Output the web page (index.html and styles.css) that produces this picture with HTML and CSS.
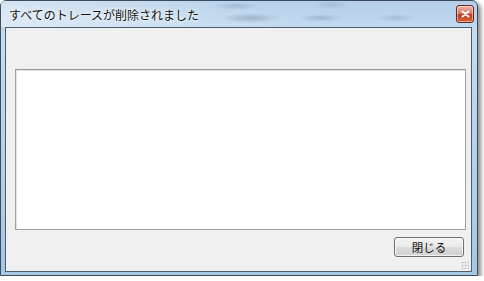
FILE: index.html
```html
<!DOCTYPE html>
<html lang="ja">
<head>
  <meta charset="UTF-8" />
  <title>すべてのトレースが削除されました</title>
  <link rel="stylesheet" href="styles.css">
</head>
<body>
  <div class="window">
    <div class="titlebar">
      <span class="title">すべてのトレースが削除されました</span>
      <button class="close" title="閉じる">
        <svg width="9" height="8" viewBox="0 0 9 8">
          <path d="M1.5 1.5 L7.5 6.5 M7.5 1.5 L1.5 6.5" stroke="#fff" stroke-width="2" stroke-linecap="round" />
        </svg>
      </button>
    </div>
    <div class="client">
      <div class="list"></div>
      <div class="footer">
        <button class="btn">閉じる</button>
      </div>
      <div class="grip"></div>
    </div>
  </div>
</body>
</html>
```

FILE: styles.css
```css
body {
  margin: 0;
  background: #fff;
  font-family: "Noto Sans CJK JP", "Noto Sans", sans-serif;
}
.window {
  width: 476px;
  height: 274px;
  border: 1px solid #3c4c5c;
  border-radius: 6px 6px 0 0;
  background: linear-gradient(to bottom, #b4cfe9 0%, #c6dcf0 12%, #a4c7e3 100%);
  box-shadow: 3px 3px 4px rgba(0,0,0,0.45);
  display: flex;
  flex-direction: column;
}
.titlebar {
  height: 26px;
  display: flex;
  align-items: flex-start;
  justify-content: space-between;
  padding: 0 3px 0 8px;
  background:
    radial-gradient(ellipse 30px 5px at 250px 17px, rgba(90,110,135,0.35), transparent),
    radial-gradient(ellipse 22px 4px at 320px 17px, rgba(90,110,135,0.3), transparent),
    radial-gradient(ellipse 20px 4px at 395px 17px, rgba(90,110,135,0.25), transparent),
    radial-gradient(ellipse 24px 4px at 235px 5px, rgba(90,110,135,0.25), transparent),
    radial-gradient(ellipse 18px 4px at 330px 4px, rgba(90,110,135,0.2), transparent),
    linear-gradient(to right, rgba(255,255,255,0.45), rgba(255,255,255,0.1) 45%, rgba(255,255,255,0) 70%);
}
.title {
  font-size: 12px;
  color: #111;
  margin-top: 5px;
  text-shadow: 0 0 6px #fff, 0 0 3px #fff;
}
.close {
  width: 18px;
  height: 18px;
  margin-top: 4px;
  padding: 0;
  border: 1px solid #6b2a1e;
  border-radius: 3px;
  background: linear-gradient(to bottom, #eab3a5 0%, #d97c66 45%, #c4391f 55%, #d9643f 100%);
  box-shadow: inset 0 0 0 1px rgba(255,255,255,0.45);
  display: flex;
  align-items: center;
  justify-content: center;
}
.client {
  flex: 1;
  margin: 0 5px 3px 4px;
  border: 1px solid #4d5d6d;
  background: #f0f0f0;
  display: flex;
  flex-direction: column;
  padding: 41px 5px 0 9px;
  position: relative;
}
.list {
  height: 159px;
  background: #fff;
  border: 1px solid #a0a0a0;
  border-top-color: #9a9a9a;
  box-shadow: inset 1px 1px 0 #e3e3e3;
}
.footer {
  display: flex;
  justify-content: flex-end;
  padding: 7px 2px 0 0;
}
.btn {
  width: 70px;
  height: 20px;
  padding: 0;
  border: 1px solid #707070;
  border-radius: 3px;
  background: linear-gradient(to bottom, #f2f2f2 0%, #ebebeb 50%, #dddddd 51%, #cfcfcf 100%);
  box-shadow: inset 0 0 0 1px rgba(255,255,255,0.7);
  font-family: "Noto Sans CJK JP", "Noto Sans", sans-serif;
  font-size: 11.5px;
  color: #111;
  line-height: 16px;
}
.grip {
  position: absolute;
  right: 2px;
  bottom: 2px;
  width: 8px;
  height: 8px;
  background-image: radial-gradient(circle, #b8b8b8 0.8px, transparent 1.1px);
  background-size: 3px 3px;
}
```
